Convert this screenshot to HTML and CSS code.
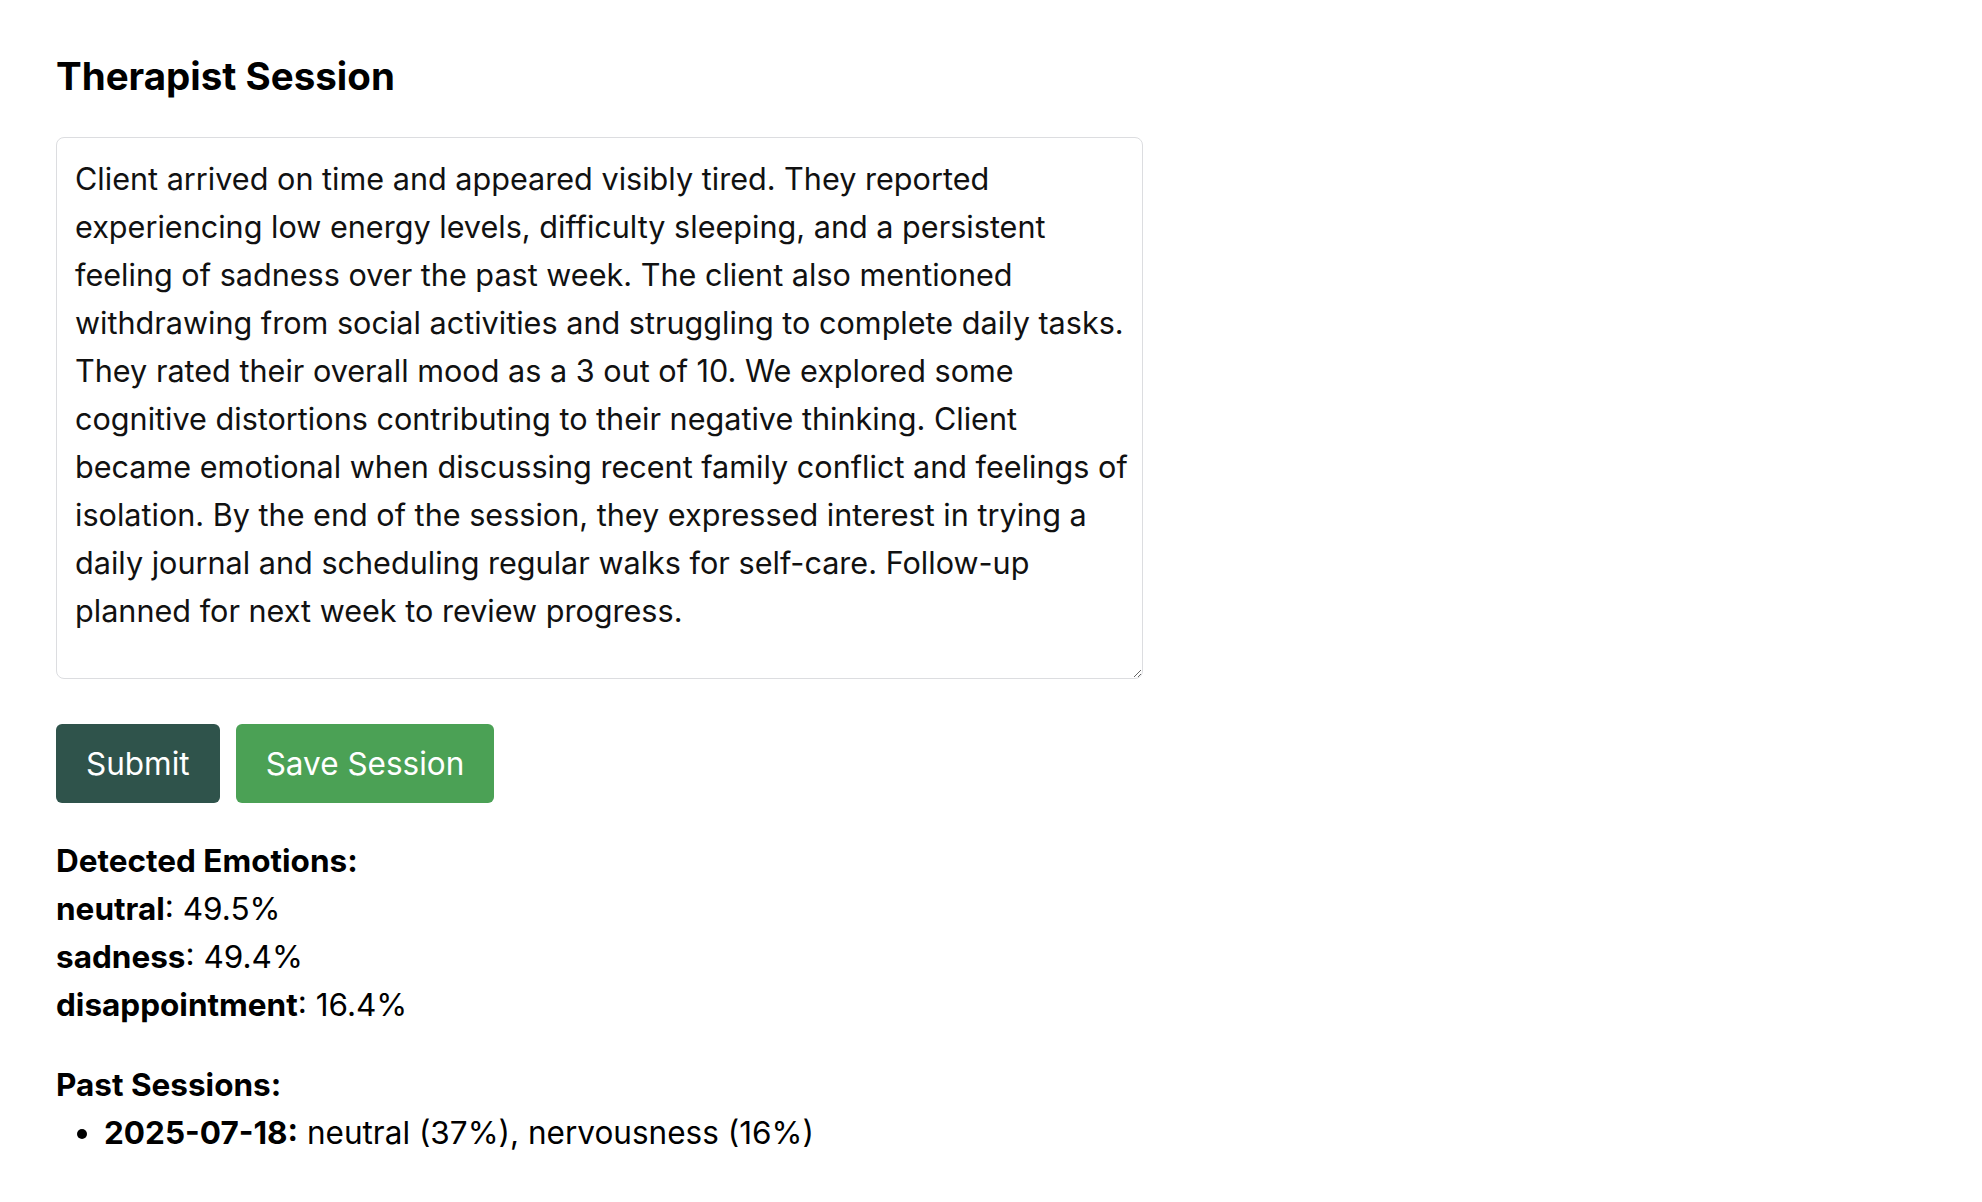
FILE: index.html
```html
<!DOCTYPE html>
<html lang="en">
<head>
<meta charset="utf-8">
<title>Therapist Session</title>
<link rel="stylesheet" href="styles.css">
</head>
<body>
<main class="page">
  <h2 class="title">Therapist Session</h2>
  <textarea class="notes">Client arrived on time and appeared visibly tired. They reported experiencing low energy levels, difficulty sleeping, and a persistent feeling of sadness over the past week. The client also mentioned withdrawing from social activities and struggling to complete daily tasks. They rated their overall mood as a 3 out of 10. We explored some cognitive distortions contributing to their negative thinking. Client became emotional when discussing recent family conflict and feelings of isolation. By the end of the session, they expressed interest in trying a daily journal and scheduling regular walks for self-care. Follow-up planned for next week to review progress.</textarea>
  <div class="actions">
    <button class="btn btn-submit">Submit</button>
    <button class="btn btn-save">Save Session</button>
  </div>
  <section class="emotions">
    <div class="label">Detected Emotions:</div>
    <div class="row"><strong>neutral</strong>: 49.5%</div>
    <div class="row"><strong>sadness</strong>: 49.4%</div>
    <div class="row"><strong>disappointment</strong>: 16.4%</div>
  </section>
  <section class="past">
    <div class="label">Past Sessions:</div>
    <ul class="past-list">
      <li><strong>2025-07-18:</strong> neutral (37%), nervousness (16%)</li>
    </ul>
  </section>
</main>
</body>
</html>
```
FILE: styles.css
```css
html, body {
  margin: 0;
  padding: 0;
  background: #ffffff;
}
.page {
  padding: 52px 56px 40px;
  font-family: Inter, "Noto Sans", sans-serif;
  font-size: 31.5px;
  line-height: 48px;
  color: #000;
}
.title {
  font-size: 38.5px;
  line-height: 48px;
  font-weight: 700;
  margin: 0 0 37px;
}
.notes {
  display: block;
  box-sizing: border-box;
  width: 1087px;
  height: 542px;
  margin: 0;
  padding: 17px 10px 17px 18px;
  border: 1px solid #dcdde0;
  border-radius: 8px;
  font-family: inherit;
  font-size: 30.6px;
  line-height: 48px;
  color: #111;
  resize: both;
}
.actions {
  display: flex;
  gap: 16px;
  margin-top: 45px;
}
.btn {
  height: 79px;
  padding: 0 30px;
  border: none;
  border-radius: 6px;
  color: #fff;
  font-family: inherit;
  font-size: 31.5px;
  cursor: pointer;
}
.btn-submit { background: #2f534b; }
.btn-save { background: #4ba155; }
.emotions {
  margin-top: 34px;
}
.label {
  font-weight: 700;
}
.past {
  margin-top: 32px;
}
.past-list {
  margin: 0;
  padding-left: 48px;
}
```
